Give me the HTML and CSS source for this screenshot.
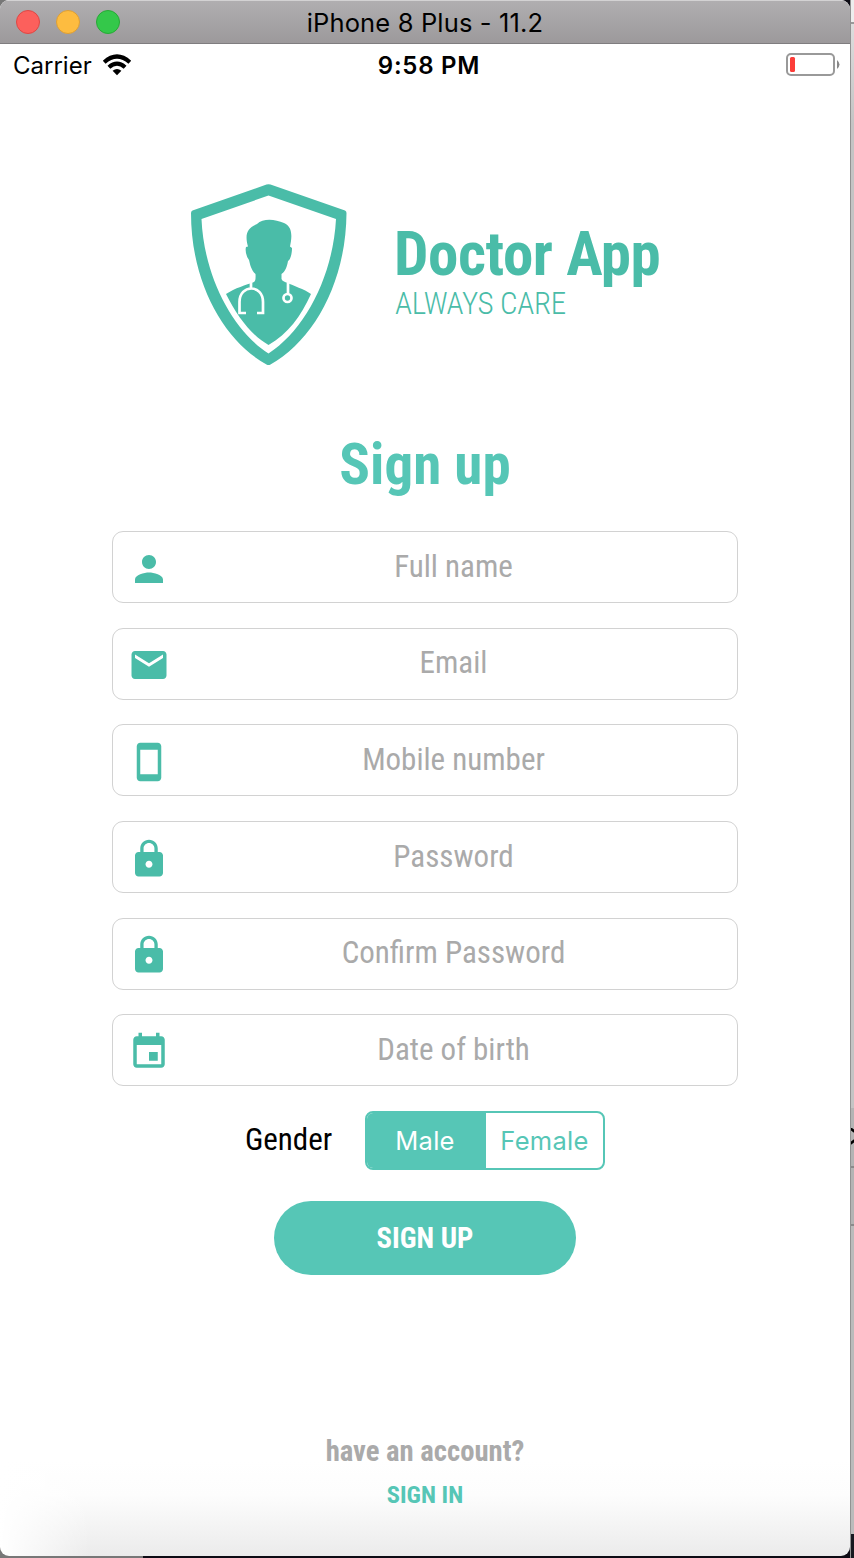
FILE: index.html
```html
<!DOCTYPE html>
<html lang="en">
<head>
<meta charset="utf-8">
<title>Doctor App – Sign up</title>
<link rel="stylesheet" href="styles.css">
</head>
<body>
<div class="desktop">
  <main class="window">
    <header class="titlebar">
      <div class="lights"><i class="light red"></i><i class="light yellow"></i><i class="light green"></i></div>
      <span class="window-title">iPhone 8 Plus - 11.2</span>
    </header>
    <div class="status">
      <div class="carrier"><span>Carrier</span>
        <svg class="wifi" width="30" height="22" viewBox="0 0 30 22"><g fill="none" stroke="#000" stroke-width="4.2"><path d="M2.2 8.2Q15 -3.2 27.8 8.2"/><path d="M6.9 13.2Q15 6 23.1 13.2"/></g><path d="M10.6 16.8Q15 13.3 19.4 16.8L15 21.2Z"/></svg>
      </div>
      <span class="clock">9:58 PM</span>
      <svg class="battery" width="54" height="24" viewBox="0 0 54 24"><rect x="1" y="1" width="47" height="21" rx="4" fill="none" stroke="#999" stroke-width="2"/><rect x="4" y="4" width="5" height="15" rx="1.5" fill="#fc3d39"/><path d="M51 7Q56 11.500 51 16Z" fill="#888"/></svg>
    </div>
    <section class="brand">
      <svg class="shield" width="156" height="182" viewBox="0 0 156 182">
        <path fill="#4abca8" fill-rule="evenodd" d="M75.500 .6Q77.500 -.3 79.500 .6L154 26.500Q155.500 27.200 155.500 29C155 99 122 157 79.500 180.500Q77.500 181.600 75.500 180.500C33 157 0 99 0 29Q0 27.200 1.500 26.500ZM77.500 11.500L10.500 35C13 92 41 146 77.500 169.500C114 146 142 92 145 35Z"/>
        <path fill="#4abca8" d="M35 110C44 104 55 101 63 98Q65 97 64.500 90C60 86 59 80 58 76C55 72 54 66 55 63L57 62.500C54 52 55 44 66 40C72 34 84 35 93 39C102 43 101 53 99 62.500L101 64C101 71 99 76 97 77C96 83 94 88 90.500 90V95Q91 97 94 98C103 102 113 105 120 110C110 132 97 150 77.500 161C60 151 46 132 35 110Z"/>
        <g fill="none" stroke="#fff" stroke-width="2.700"><path d="M60 97V105M55 129H48.500V118C48.500 100 72 100 72 118V129H66M97 99V109.500"/><circle cx="96.500" cy="114" r="4"/></g>
      </svg>
      <div class="brand-copy"><h1 class="brand-name">Doctor App</h1><p class="tagline">ALWAYS CARE</p></div>
    </section>
    <h2 class="heading">Sign up</h2>
    <form class="form">
      <div class="field"><svg class="icon" viewBox="0 0 24 24"><path d="M12 12c2.210 0 4-1.790 4-4s-1.790-4-4-4-4 1.790-4 4 1.790 4 4 4zm0 2c-2.670 0-8 1.340-8 4v2h16v-2c0-2.660-5.330-4-8-4z"/></svg><span class="hint">Full name</span></div>
      <div class="field"><svg class="icon" viewBox="0 0 24 24"><path d="M20 4H4c-1.100 0-1.990.9-1.990 2L2 18c0 1.100.9 2 2 2h16c1.100 0 2-.9 2-2V6c0-1.100-.9-2-2-2zm0 4l-8 5-8-5V6l8 5 8-5v2z"/></svg><span class="hint">Email</span></div>
      <div class="field"><svg class="icon" viewBox="0 0 24 24"><path d="M17 1.010L7 1c-1.100 0-2 .9-2 2v18c0 1.100.9 2 2 2h10c1.100 0 2-.9 2-2V3c0-1.100-.9-1.990-2-1.990zM17 19H7V5h10v14z"/></svg><span class="hint">Mobile number</span></div>
      <div class="field"><svg class="icon" viewBox="0 0 24 24"><path d="M18 8h-1V6c0-2.760-2.240-5-5-5S7 3.240 7 6v2H6c-1.100 0-2 .9-2 2v10c0 1.100.9 2 2 2h12c1.100 0 2-.9 2-2V10c0-1.100-.9-2-2-2zm-6 9c-1.100 0-2-.9-2-2s.9-2 2-2 2 .9 2 2-.9 2-2 2zm3.100-9H8.900V6c0-1.710 1.390-3.100 3.100-3.100 1.710 0 3.100 1.390 3.100 3.100v2z"/></svg><span class="hint">Password</span></div>
      <div class="field"><svg class="icon" viewBox="0 0 24 24"><path d="M18 8h-1V6c0-2.760-2.240-5-5-5S7 3.240 7 6v2H6c-1.100 0-2 .9-2 2v10c0 1.100.9 2 2 2h12c1.100 0 2-.9 2-2V10c0-1.100-.9-2-2-2zm-6 9c-1.100 0-2-.9-2-2s.9-2 2-2 2 .9 2 2-.9 2-2 2zm3.100-9H8.900V6c0-1.710 1.390-3.100 3.100-3.100 1.710 0 3.100 1.390 3.100 3.100v2z"/></svg><span class="hint">Confirm Password</span></div>
      <div class="field"><svg class="icon" viewBox="0 0 24 24"><path d="M17 12h-5v5h5v-5zM16 1v2H8V1H6v2H5c-1.110 0-1.990.9-1.990 2L3 19c0 1.100.89 2 2 2h14c1.100 0 2-.9 2-2V5c0-1.100-.9-2-2-2h-1V1h-2zm3 18H5V8h14v11z"/></svg><span class="hint">Date of birth</span></div>
    </form>
    <div class="gender"><span class="gender-label">Gender</span><div class="segments"><span class="segment active">Male</span><span class="segment">Female</span></div></div>
    <div class="submit">SIGN UP</div>
    <footer class="account"><p class="question">have an account?</p><p class="signin">SIGN IN</p></footer>
  </main>
  <aside class="edge">
    <div class="edge-top"></div><div class="edge-gray"></div>
    <div class="edge-row"><svg width="4" height="18" viewBox="0 0 4 18"><path d="M-1 0L4 4M-1 16L4 12" stroke="#000" stroke-width="2.500"/></svg></div>
    <div class="edge-row second"></div><div class="edge-low"></div><div class="edge-dark"></div>
  </aside>
</div>
</body>
</html>
```
FILE: styles.css
```css
* { box-sizing: border-box; }
body { margin: 0; font-family: "Roboto Condensed", Roboto, sans-serif; font-stretch: 75%; }
h1, h2, p { margin: 0; font-size: inherit; }
.desktop { width: 854px; height: 1558px; display: flex; overflow: hidden; background: linear-gradient(90deg, #777 143px, #0d0b14 143px); }
.window { width: 850px; height: 1556px; flex: none; display: flex; flex-direction: column; border-radius: 9px; overflow: hidden; background: linear-gradient(90deg, #fff, rgba(255,255,255,0) 90px) bottom / 100% 96px no-repeat, linear-gradient(#fff 1460px, #fdfdfd 1495px, #ebebeb 1556px); }
.titlebar { height: 44px; flex: none; display: grid; grid-template-columns: 1fr auto 1fr; align-items: center; background: linear-gradient(#b0aeb0, #9c999b); border-top: 1px solid #d3d2d3; border-bottom: 1px solid #7f7d7f; font-family: Inter, sans-serif; font-stretch: 100%; font-size: 25.500px; }
.lights { display: flex; gap: 16px; padding-left: 16px; }
.light { width: 24px; height: 24px; border-radius: 50%; border: 1px solid; }
.red { background: #fc605c; border-color: #df4744; }
.yellow { background: #fdbc40; border-color: #de9f34; }
.green { background: #34c84a; border-color: #27aa35; }
.window-title { letter-spacing: .15px; padding-top: 1px; }
.status { height: 44px; flex: none; display: grid; grid-template-columns: 1fr auto 1fr; align-items: center; padding: 0 10px 2px 13px; font-family: Inter, sans-serif; font-stretch: 100%; font-size: 24px; }
.carrier { display: flex; gap: 10px; align-items: center; }
.clock { font-weight: 600; letter-spacing: .75px; padding-left: 5px; }
.battery { justify-self: end; }
.brand { display: flex; margin: 96px 0 0 191px; height: 181px; }
.shield { flex: none; }
.brand-copy { padding: 37px 0 0 48px; color: #4abca8; white-space: nowrap; }
.brand-name { font-size: 61px; line-height: 66px; font-weight: 700; letter-spacing: -.45px; margin-left: -1px; }
.tagline { font-size: 31px; line-height: 34px; font-weight: 300; letter-spacing: -.3px; }
.heading { margin-top: 65px; height: 70px; line-height: 70px; font-size: 57px; font-weight: 700; text-align: center; color: #56c6b6; }
.form { margin: 31.300px 112px 0; display: flex; flex-direction: column; gap: 24.600px; }
.field { height: 72px; border: 1px solid #d2d2d2; border-radius: 11px; display: flex; align-items: center; padding-left: 15px; }
.icon { width: 42px; height: 42px; flex: none; fill: #4abca8; margin-top: 3px; }
.hint { flex: 1; text-align: center; color: #aaa; font-size: 31px; padding-bottom: 2px; }
.gender { margin: 24.700px 0 0 245px; height: 59px; display: flex; align-items: center; }
.gender-label { width: 120px; font-size: 31px; padding-bottom: 1px; }
.segments { width: 240px; height: 59px; border: 2px solid #56c6b6; border-radius: 8px; display: flex; overflow: hidden; font: 25.500px Inter, sans-serif; letter-spacing: .3px; }
.segment { flex: 1; display: grid; place-items: center; color: #56c6b6; padding-top: 1px; }
.active { background: #56c6b6; color: #fff; flex: 0 0 119px; padding-right: 3px; }
.submit { margin: 31px auto 0; width: 302px; height: 74px; flex: none; border-radius: 37px; background: #56c6b6; color: #fff; font-size: 28.700px; font-weight: 700; display: grid; place-items: center; }
.account { margin-top: 158px; text-align: center; font-weight: 700; }
.question { color: #aaa; font-size: 28.700px; line-height: 36px; }
.signin { color: #56c6b6; font-size: 24.500px; line-height: 36px; margin-top: 8px; }
.edge { width: 4px; display: flex; flex-direction: column; border-left: 1px solid #929292; }
.edge-top { height: 24px; background: #eee; border-bottom: 2px solid #999; }
.edge-gray { height: 1084px; background: linear-gradient(#ddd, #c4c4c4 100px); }
.edge-row { height: 60px; background: #b4b4b4; border-bottom: 2px solid #8b8b8b; padding-top: 20px; }
.edge-row svg { display: block; }
.second { height: 58px; }
.edge-low { height: 308px; background: #bbb; }
.edge-dark { flex: 1; background: #17181f; }
```
